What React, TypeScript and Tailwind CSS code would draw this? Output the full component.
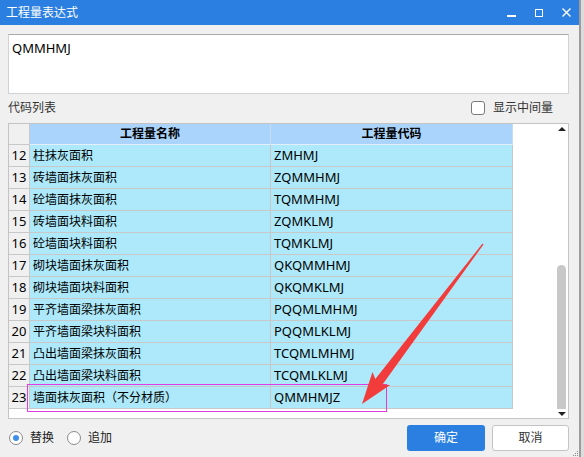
import React from 'react'

const rows: [number, string, string][] = [
  [12, '柱抹灰面积', 'ZMHMJ'],
  [13, '砖墙面抹灰面积', 'ZQMMHMJ'],
  [14, '砼墙面抹灰面积', 'TQMMHMJ'],
  [15, '砖墙面块料面积', 'ZQMKLMJ'],
  [16, '砼墙面块料面积', 'TQMKLMJ'],
  [17, '砌块墙面抹灰面积', 'QKQMMHMJ'],
  [18, '砌块墙面块料面积', 'QKQMKLMJ'],
  [19, '平齐墙面梁抹灰面积', 'PQQMLMHMJ'],
  [20, '平齐墙面梁块料面积', 'PQQMLKLMJ'],
  [21, '凸出墙面梁抹灰面积', 'TCQMLMHMJ'],
  [22, '凸出墙面梁块料面积', 'TCQMLKLMJ'],
  [23, '墙面抹灰面积（不分材质）', 'QMMHMJZ'],
]

function TitleBar() {
  return (
    <div className="h-[25px] bg-[#2b7fe0] flex items-center justify-between pl-[6px] pr-[8px]">
      <span className="text-[12px] text-white">工程量表达式</span>
      <div className="flex items-center gap-[19px]">
        <div className="w-[9px] h-[2px] bg-white mt-[6px]" />
        <div className="w-[8px] h-[8px] border-[1.5px] border-white" />
        <svg width="9" height="9" viewBox="0 0 9 9">
          <path d="M0.5 0.5 L8.5 8.5 M8.5 0.5 L0.5 8.5" stroke="white" strokeWidth="1.4" />
        </svg>
      </div>
    </div>
  )
}

function Scrollbar() {
  return (
    <div className="w-[13px] flex flex-col items-center">
      <div className="h-[10px] pt-[3px]">
        <div className="w-0 h-0 border-x-[4px] border-x-transparent border-b-[4px] border-b-[#222]" />
      </div>
      <div className="flex-1 flex flex-col justify-end pb-[1px]">
        <div className="w-[9px] h-[144px] rounded-t-[5px] bg-[#c8c8c8]" />
      </div>
      <div className="h-[8px] pt-[2px]">
        <div className="w-0 h-0 border-x-[4px] border-x-transparent border-t-[4px] border-t-[#222]" />
      </div>
    </div>
  )
}

function Table() {
  return (
    <div className="mt-[3px] h-[296px] border border-[#c4c4c4] bg-white flex">
      <div className="flex-1 flex flex-col">
        <div className="flex h-[21px]">
          <div className="w-[21px] bg-[#f0f0f0] border-r border-b border-[#c8c8c8]" />
          <div className="w-[241px] bg-[#aad4fb] border-r border-b border-r-[#c6dcf0] border-b-[#e4eef8] flex items-center justify-center text-[12px] font-bold text-black">工程量名称</div>
          <div className="w-[242px] bg-[#aad4fb] border-r border-b border-r-[#c6dcf0] border-b-[#e4eef8] flex items-center justify-center text-[12px] font-bold text-black">工程量代码</div>
        </div>
        {rows.map(([n, name, code]) => (
          <div key={n} className="flex h-[22px]">
            <div className="w-[21px] bg-[#f0f0f0] border-r border-b border-[#c8c8c8] flex items-center justify-center text-[13px] text-black">{n}</div>
            <div className="w-[241px] bg-[#ade9fa] border-r border-b border-[#c8c8c8] flex items-center pl-[3px] text-[12px] text-black">{name}</div>
            <div className="w-[242px] bg-[#ade9fa] border-r border-b border-[#c8c8c8] flex items-center pl-[3px] text-[13px] text-black">{code}</div>
          </div>
        ))}
      </div>
      <Scrollbar />
    </div>
  )
}

function Radio({ checked, label }: { checked: boolean; label: string }) {
  return (
    <div className="flex items-center gap-[7px]">
      <div className="w-[14px] h-[14px] rounded-full border border-[#8a8a8a] bg-white flex items-center justify-center">
        {checked && <div className="w-[6px] h-[6px] rounded-full bg-[#3c8ee8]" />}
      </div>
      <span className="text-[12px] text-[#222]">{label}</span>
    </div>
  )
}

export default function App() {
  return (
    <div className="relative w-[584px] h-[457px] overflow-hidden flex font-['Noto_Sans','Noto_Sans_CJK_SC',sans-serif] bg-[#d8d8d8]">
      <div className="relative w-[579px] flex flex-col bg-[#f0f0f0]">
        <TitleBar />
        <div className="pl-[8px] pr-[10px] flex flex-col">
          <div className="mt-[9px] h-[60px] bg-white border border-[#cfd3d8] border-t-[#a8a8a8] pl-[3px] pt-[4px] text-[13px] text-black leading-[18px]">QMMHMJ</div>
          <div className="mt-[2px] h-[24px] flex items-center justify-between pr-[16px]">
            <span className="text-[12px] text-[#333]">代码列表</span>
            <div className="flex items-center gap-[8px]">
              <div className="w-[14px] h-[14px] border border-[#7a7a7a] rounded-[3px] bg-white" />
              <span className="text-[12px] text-[#333]">显示中间量</span>
            </div>
          </div>
          <Table />
          <div className="mt-[6px] h-[26px] flex items-center justify-between">
            <div className="flex items-center gap-[13px] pl-[1px]">
              <Radio checked label="替换" />
              <Radio checked={false} label="追加" />
            </div>
            <div className="flex gap-[7px]">
              <button className="w-[78px] h-[26px] rounded-[3px] bg-[#2b7fe0] text-white text-[12px]">确定</button>
              <button className="w-[77px] h-[26px] rounded-[3px] bg-white border border-[#c4c4c4] text-[#333] text-[12px]">取消</button>
            </div>
          </div>
        </div>
        <div className="absolute right-[1px] bottom-[1px] grid grid-cols-3 gap-[1px]">
          {[0, 1, 2, 3, 4, 5, 6, 7, 8].map(i => (
            <div key={i} className={`w-[1px] h-[1px] ${[0, 1, 3].includes(i) ? 'bg-transparent' : 'bg-[#888]'}`} />
          ))}
        </div>
      </div>
      <div className="w-[5px] border-l-2 border-[#9c9c9c] bg-[#dcdcdc]" />
      <div className="absolute left-[27px] top-[384px] w-[360px] h-[28px] border border-[#e33be3] pointer-events-none" />
      <svg className="absolute left-0 top-0 pointer-events-none" width="584" height="457">
        <polygon
          points="483.5,244.4 382.5,384.4 390.1,385.1 362,404 372.5,371.9 375.3,379 482.5,243.6"
          fill="#f23c3c"
        />
      </svg>
    </div>
  )
}
